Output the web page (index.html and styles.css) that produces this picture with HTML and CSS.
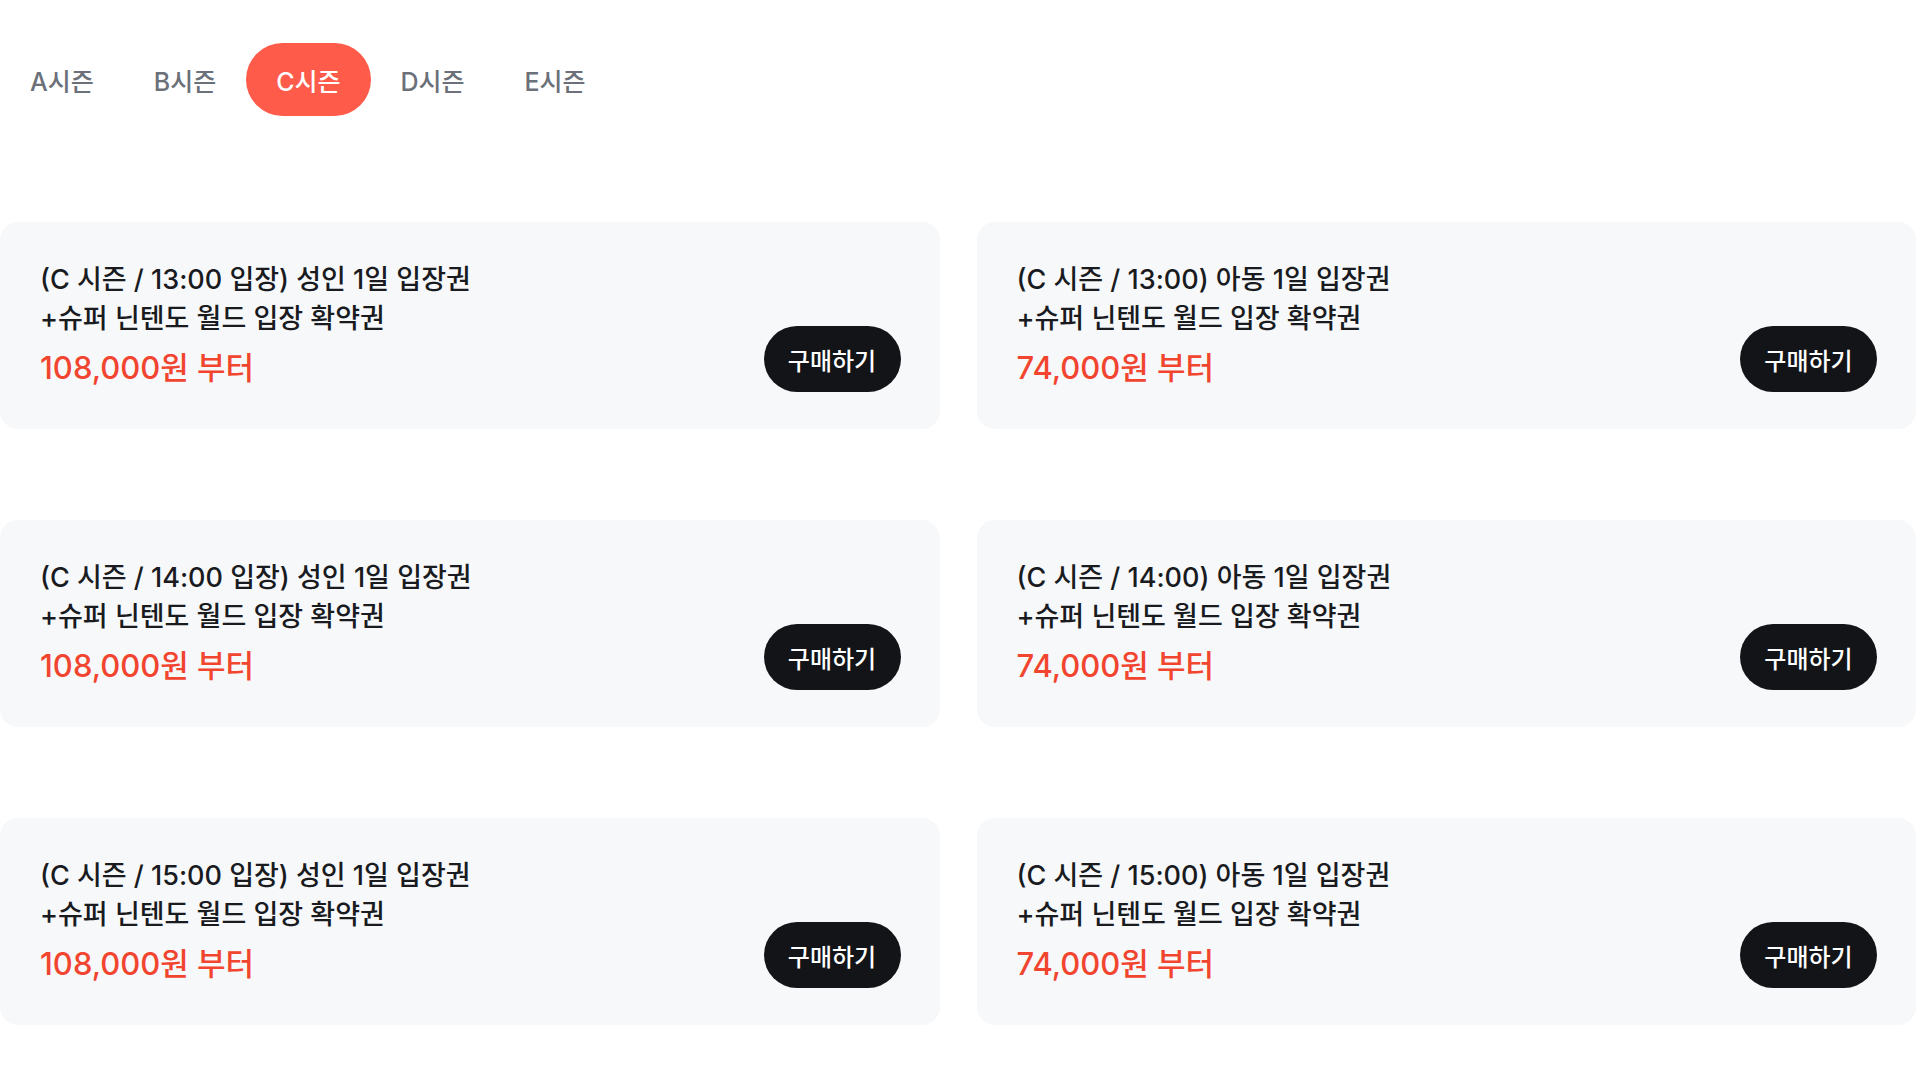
FILE: index.html
```html
<!DOCTYPE html>
<html lang="ko">
<head>
  <meta charset="UTF-8">
  <meta name="viewport" content="width=device-width, initial-scale=1.0">
  <title>티켓</title>
  <link rel="stylesheet" href="styles.css">
</head>
<body>
  <div class="tabs">
    <button class="tab">A시즌</button>
    <button class="tab">B시즌</button>
    <button class="tab active">C시즌</button>
    <button class="tab">D시즌</button>
    <button class="tab">E시즌</button>
  </div>

  <div class="ticket-grid">
    <div class="ticket">
      <div class="ticket-info">
        <p class="ticket-name">(C 시즌 / 13:00 입장) 성인 1일 입장권<br>+슈퍼 닌텐도 월드 입장 확약권</p>
        <p class="ticket-price">108,000원 부터</p>
      </div>
      <button class="buy">구매하기</button>
    </div>
    <div class="ticket">
      <div class="ticket-info">
        <p class="ticket-name">(C 시즌 / 13:00) 아동 1일 입장권<br>+슈퍼 닌텐도 월드 입장 확약권</p>
        <p class="ticket-price">74,000원 부터</p>
      </div>
      <button class="buy">구매하기</button>
    </div>
    <div class="ticket">
      <div class="ticket-info">
        <p class="ticket-name">(C 시즌 / 14:00 입장) 성인 1일 입장권<br>+슈퍼 닌텐도 월드 입장 확약권</p>
        <p class="ticket-price">108,000원 부터</p>
      </div>
      <button class="buy">구매하기</button>
    </div>
    <div class="ticket">
      <div class="ticket-info">
        <p class="ticket-name">(C 시즌 / 14:00) 아동 1일 입장권<br>+슈퍼 닌텐도 월드 입장 확약권</p>
        <p class="ticket-price">74,000원 부터</p>
      </div>
      <button class="buy">구매하기</button>
    </div>
    <div class="ticket">
      <div class="ticket-info">
        <p class="ticket-name">(C 시즌 / 15:00 입장) 성인 1일 입장권<br>+슈퍼 닌텐도 월드 입장 확약권</p>
        <p class="ticket-price">108,000원 부터</p>
      </div>
      <button class="buy">구매하기</button>
    </div>
    <div class="ticket">
      <div class="ticket-info">
        <p class="ticket-name">(C 시즌 / 15:00) 아동 1일 입장권<br>+슈퍼 닌텐도 월드 입장 확약권</p>
        <p class="ticket-price">74,000원 부터</p>
      </div>
      <button class="buy">구매하기</button>
    </div>
  </div>
</body>
</html>
```

FILE: styles.css
```css
body {
  margin: 0;
  font-family: Inter, "Noto Sans CJK KR", sans-serif;
  background: #fff;
  color: #191b1f;
}
.tabs {
  display: flex;
  padding-top: 43px;
}
.tab {
  font-family: inherit;
  font-size: 25px;
  font-weight: 500;
  color: #6b7079;
  background: none;
  border: none;
  height: 73px;
  padding: 0 30px;
  border-radius: 37px;
  cursor: pointer;
}
.tab.active {
  background: #ff5b4b;
  color: #fff;
}
.ticket-grid {
  display: grid;
  grid-template-columns: 1fr 1fr;
  column-gap: 37px;
  row-gap: 91px;
  width: 1916px;
  margin-top: 106px;
}
.ticket {
  background: #f7f8fa;
  border-radius: 18px;
  height: 207px;
  box-sizing: border-box;
  padding: 0 39px 0 40px;
  display: flex;
  align-items: center;
  justify-content: space-between;
}
.ticket-info p {
  margin: 0;
}
.ticket-name {
  font-size: 27px;
  font-weight: 500;
  line-height: 39px;
}
.ticket-info .ticket-price {
  margin-top: 6px;
  font-size: 31px;
  font-weight: 500;
  line-height: 48px;
  color: #f2452f;
}
.buy {
  font-family: inherit;
  font-size: 24px;
  font-weight: 500;
  color: #fff;
  background: #121418;
  border: none;
  width: 137px;
  height: 66px;
  border-radius: 33px;
  margin-top: 67px;
  cursor: pointer;
}
```
